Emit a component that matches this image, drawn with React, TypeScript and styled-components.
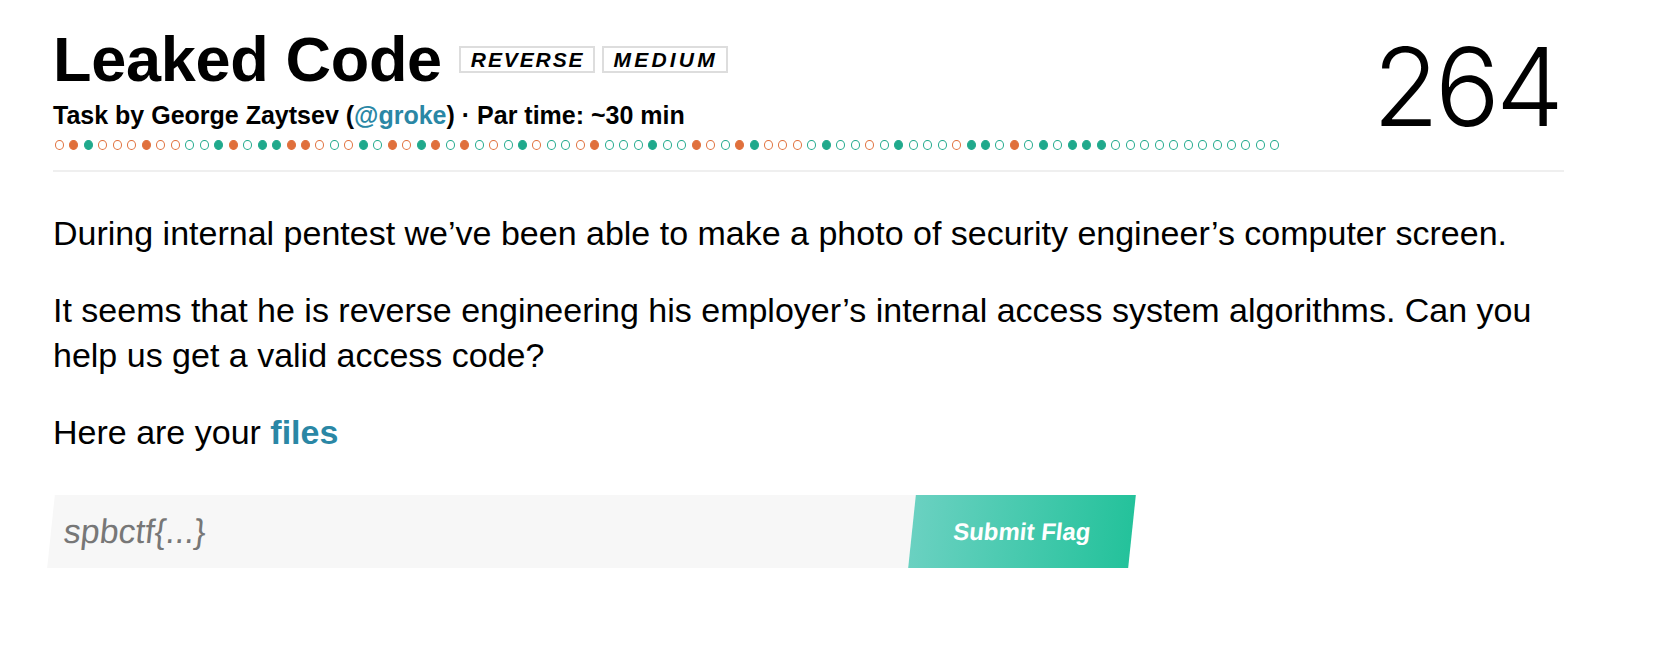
import React from "react";
import styled, { createGlobalStyle } from "styled-components";

const Global = createGlobalStyle`
  html, body { margin: 0; padding: 0; background: #fff; }
  body { font-family: "Liberation Sans", Arial, sans-serif; color: #000; }
`;

const ORANGE = "#e0703c";
const TEAL = "#20a98c";
const LINK = "#2a87a5";

const Page = styled.main`
  width: 1511px;
  padding: 28px 0 0 53px;
`;

const Header = styled.header`
  display: flex;
  justify-content: space-between;
  align-items: flex-start;
`;

const HeadLeft = styled.div`
  display: flex;
  flex-direction: column;
`;

const TitleRow = styled.div`
  display: flex;
  align-items: center;
  gap: 7px;
`;

const Title = styled.h1`
  margin: 0 10px 0 0;
  font-size: 63px;
  line-height: 62px;
  font-weight: 700;
  letter-spacing: -0.3px;
`;

const Badge = styled.span<{ $spacing: number }>`
  display: inline-flex;
  align-items: center;
  height: 23px;
  padding: 0 8px 0 10px;
  border: 2px solid #dddddd;
  font-size: 21px;
  font-weight: 700;
  font-style: italic;
  letter-spacing: ${(p) => p.$spacing}px;
  text-transform: uppercase;
  margin-top: 1px;
`;

const Subtitle = styled.div`
  margin-top: 10px;
  font-size: 25px;
  line-height: 30px;
  font-weight: 700;
`;

const Link = styled.a`
  color: ${LINK};
  text-decoration: none;
`;

const StrongLink = styled(Link)`
  font-weight: 700;
`;

const DotRow = styled.div`
  display: flex;
  gap: 5.48px;
  margin: 10px 0 0 2px;
`;

const Dot = styled.span<{ $color: string; $filled: boolean }>`
  box-sizing: border-box;
  width: 9px;
  height: 10px;
  border-radius: 50%;
  border: 1.5px solid ${(p) => p.$color};
  background: ${(p) => (p.$filled ? p.$color : "transparent")};
`;

const Score = styled.div`
  font-family: Inter, "Liberation Sans", sans-serif;
  font-weight: 300;
  font-size: 108px;
  line-height: 107px;
  letter-spacing: -4px;
  margin: 5px 4px 0 0;
`;

const Rule = styled.hr`
  margin: 20px 0 0;
  border: 0;
  height: 2px;
  background: #efefef;
`;

const Body = styled.section`
  padding-top: 39px;
`;

const Para = styled.p`
  margin: 0 0 32px;
  font-size: 34px;
  line-height: 45px;
`;

const Form = styled.form`
  display: flex;
  width: 1081px;
  height: 73px;
  margin: 40px 0 0 -2px;
  transform: skewX(-6deg);
`;

const FlagInput = styled.input`
  flex: 1;
  min-width: 0;
  border: 0;
  outline: none;
  background: #f7f7f7;
  padding: 0 0 0 13px;
  font-family: "Liberation Sans", Arial, sans-serif;
  font-size: 34px;
  color: #333;
  &::placeholder { color: #777; }
`;

const SubmitButton = styled.button`
  width: 220px;
  border: 0;
  background: linear-gradient(90deg, #6ad1c1 0%, #24c29b 100%);
  color: #fff;
  font-family: "Liberation Sans", Arial, sans-serif;
  font-size: 24px;
  font-weight: 700;
  cursor: pointer;
`;

// o = hollow orange, O = filled orange, t = hollow teal, T = filled teal
const DOTS =
  "oOTooo" +
  "Ooott" +
  "TOtTTOOotoTtOoTOtOtotTottoOtttT" +
  "ttOotOTooo" +
  "tTttotTttt" +
  "oTTtOtTtTT" +
  "T" +
  "tttttttttttt";

export default function App() {
  const dots = DOTS.split("");
  return (
    <>
      <Global />
      <Page>
        <Header>
          <HeadLeft>
            <TitleRow>
              <Title>Leaked Code</Title>
              <Badge $spacing={1.9}>Reverse</Badge>
              <Badge $spacing={3.2}>Medium</Badge>
            </TitleRow>
            <Subtitle>
              Task by George Zaytsev (<Link href="#">@groke</Link>) · Par time: ~30 min
            </Subtitle>
            <DotRow>
              {dots.map((c, i) => (
                <Dot
                  key={i}
                  $color={c.toLowerCase() === "o" ? ORANGE : TEAL}
                  $filled={c === "O" || c === "T"}
                />
              ))}
            </DotRow>
          </HeadLeft>
          <Score>264</Score>
        </Header>
        <Rule />
        <Body>
          <Para>
            During internal pentest we’ve been able to make a photo of security engineer’s computer screen.
          </Para>
          <Para>
            It seems that he is reverse engineering his employer’s internal access system algorithms. Can you help us get a valid access code?
          </Para>
          <Para>
            Here are your <StrongLink href="#">files</StrongLink>
          </Para>
          <Form onSubmit={(e) => e.preventDefault()}>
            <FlagInput placeholder="spbctf{...}" />
            <SubmitButton type="submit">Submit Flag</SubmitButton>
          </Form>
        </Body>
      </Page>
    </>
  );
}
